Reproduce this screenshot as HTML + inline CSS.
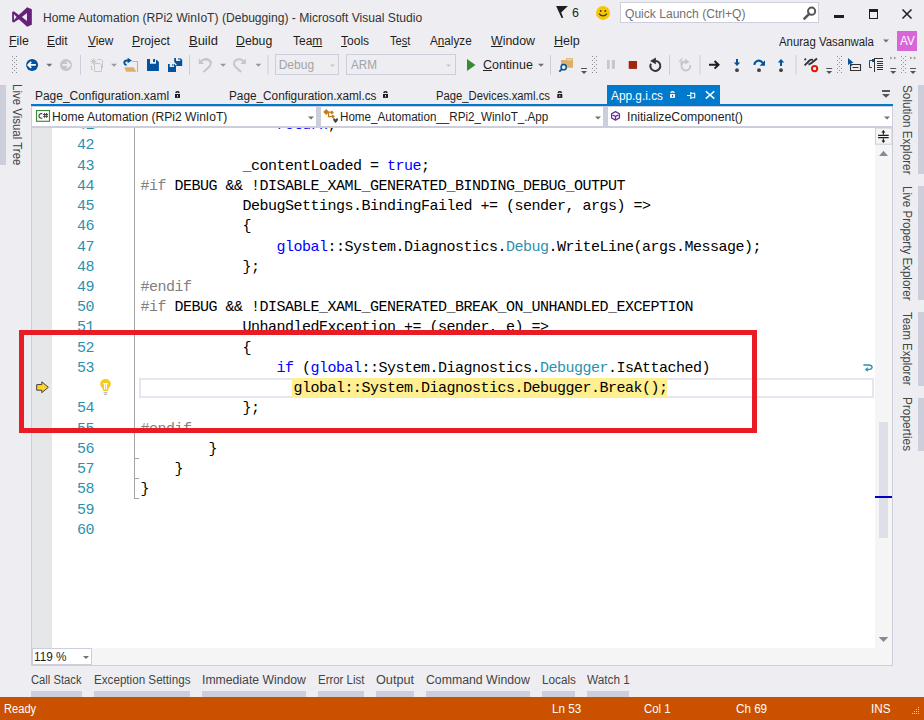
<!DOCTYPE html>
<html><head><meta charset="utf-8"><style>
html,body{margin:0;padding:0;}
body{width:924px;height:720px;position:relative;overflow:hidden;background:#EEEEF2;font-family:"Liberation Sans", sans-serif;}
.r{position:absolute;}
.t{position:absolute;white-space:nowrap;line-height:1;font-family:"Liberation Sans", sans-serif;}
.t u{text-decoration:underline;text-underline-offset:1px;}
.m{position:absolute;white-space:pre;font-family:"Liberation Mono", monospace;font-size:15px;line-height:15px;letter-spacing:-0.5px;color:#000;}
</style></head><body>
<svg class="r" style="left:0px;top:0px;" width="40" height="30" viewBox="0 0 40 30"><path fill="#68217A" fill-rule="evenodd" d="M12.15 12.12 L13.78 11.22 L18.83 15 L27.13 7.25 L31.83 9.23 L31.83 24.76 L27.13 26.74 L18.83 19.16 L13.78 22.6 L12.15 21.7 Z M13.96 14.29 L16.66 17 L13.96 19.88 Z M26.95 13.03 L21.9 17 L26.95 20.97 Z"/></svg>
<div class="t" style="left:42.99px;top:11.84px;font-size:12px;color:#333333;transform:scaleX(1.0085);transform-origin:0 0;">Home Automation (RPi2 WinIoT) (Debugging) - Microsoft Visual Studio</div>
<svg class="r" style="left:555px;top:4px;" width="16" height="16" viewBox="0 0 16 16"><path fill="#1E1E1E" d="M1.1 2.1 L12.9 2.1 L6.2 8.6 L8.3 13.8 L6.6 13.9 Z"/></svg>
<div class="t" style="left:571.58px;top:6.84px;font-size:12px;color:#1E1E1E;transform:scaleX(1.0357);transform-origin:0 0;">6</div>
<svg class="r" style="left:595px;top:5px;" width="16" height="16" viewBox="0 0 16 16"><circle cx="8" cy="7.9" r="7" fill="#F6C600"/><rect x="4.9" y="5.1" width="1.5" height="1.7" fill="#333"/><rect x="9.6" y="5.1" width="1.5" height="1.7" fill="#333"/><path d="M4 8.6 Q8 13.2 12 8.6" stroke="#333" stroke-width="1.2" fill="none"/></svg>
<div class="r" style="left:620px;top:2px;width:199px;height:21px;background:#fff;border:1px solid #CCCEDB;box-sizing:border-box;"></div>
<div class="t" style="left:624.80px;top:7.84px;font-size:12px;color:#717171;transform:scaleX(1.0059);transform-origin:0 0;">Quick Launch (Ctrl+Q)</div>
<svg class="r" style="left:802px;top:5px;" width="16" height="16" viewBox="0 0 16 16"><circle cx="9.6" cy="6.2" r="3.6" stroke="#555" stroke-width="2" fill="none"/><path d="M7.2 8.8 L2.4 13.6" stroke="#555" stroke-width="2.6" stroke-linecap="round"/></svg>
<div class="r" style="left:834px;top:14.5px;width:10px;height:3.5px;background:#1E1E1E;"></div>
<div class="r" style="left:869px;top:9px;width:9px;height:9.5px;border:1.2px solid #1E1E1E;border-top-width:3px;box-sizing:border-box;"></div>
<svg class="r" style="left:900px;top:8px;" width="14" height="12" viewBox="0 0 14 12"><path d="M2.5 1.5 L11.5 10.5 M11.5 1.5 L2.5 10.5" stroke="#1E1E1E" stroke-width="1.5"/></svg>
<div class="t" style="left:8.67px;top:34.84px;font-size:12px;color:#1E1E1E;transform:scaleX(1.0335);transform-origin:0 0;"><u>F</u>ile</div>
<div class="t" style="left:47.01px;top:34.84px;font-size:12px;color:#1E1E1E;transform:scaleX(0.9949);transform-origin:0 0;"><u>E</u>dit</div>
<div class="t" style="left:87.60px;top:34.84px;font-size:12px;color:#1E1E1E;transform:scaleX(0.9844);transform-origin:0 0;"><u>V</u>iew</div>
<div class="t" style="left:131.99px;top:34.84px;font-size:12px;color:#1E1E1E;transform:scaleX(1.0138);transform-origin:0 0;"><u>P</u>roject</div>
<div class="t" style="left:188.92px;top:34.84px;font-size:12px;color:#1E1E1E;transform:scaleX(1.0803);transform-origin:0 0;"><u>B</u>uild</div>
<div class="t" style="left:235.98px;top:34.84px;font-size:12px;color:#1E1E1E;transform:scaleX(1.0238);transform-origin:0 0;"><u>D</u>ebug</div>
<div class="t" style="left:292.50px;top:34.84px;font-size:12px;color:#1E1E1E;transform:scaleX(0.9965);transform-origin:0 0;">Tea<u>m</u></div>
<div class="t" style="left:341.30px;top:34.84px;font-size:12px;color:#1E1E1E;transform:scaleX(1.0037);transform-origin:0 0;"><u>T</u>ools</div>
<div class="t" style="left:389.52px;top:34.84px;font-size:12px;color:#1E1E1E;transform:scaleX(0.9263);transform-origin:0 0;">Te<u>s</u>t</div>
<div class="t" style="left:430.00px;top:34.84px;font-size:12px;color:#1E1E1E;transform:scaleX(0.9763);transform-origin:0 0;">A<u>n</u>alyze</div>
<div class="t" style="left:491.20px;top:34.84px;font-size:12px;color:#1E1E1E;transform:scaleX(1.0305);transform-origin:0 0;"><u>W</u>indow</div>
<div class="t" style="left:554.25px;top:34.84px;font-size:12px;color:#1E1E1E;transform:scaleX(1.0474);transform-origin:0 0;"><u>H</u>elp</div>
<div class="t" style="left:779.20px;top:35.84px;font-size:12px;color:#1E1E1E;transform:scaleX(0.9510);transform-origin:0 0;">Anurag Vasanwala</div>
<svg class="r" style="left:882px;top:38px;" width="8" height="6" viewBox="0 0 8 6"><path d="M1 1.5 L7 1.5 L4 4.5 Z" fill="#717171"/></svg>
<div class="r" style="left:897px;top:31px;width:20px;height:20px;background:#D767D8;"></div>
<div class="t" style="left:899.70px;top:34.54px;font-size:12px;color:#fff;transform:scaleX(0.9667);transform-origin:0 0;">AV</div>
<svg class="r" style="left:0;top:52px" width="924" height="26" viewBox="0 52 924 26"><g fill="#8D8D8D" shape-rendering="crispEdges"><rect x="12" y="56" width="1" height="1"/><rect x="16" y="56" width="1" height="1"/><rect x="14" y="58" width="1" height="1"/><rect x="12" y="60" width="1" height="1"/><rect x="16" y="60" width="1" height="1"/><rect x="14" y="62" width="1" height="1"/><rect x="12" y="64" width="1" height="1"/><rect x="16" y="64" width="1" height="1"/><rect x="14" y="66" width="1" height="1"/><rect x="12" y="68" width="1" height="1"/><rect x="16" y="68" width="1" height="1"/><rect x="14" y="70" width="1" height="1"/><rect x="12" y="72" width="1" height="1"/><rect x="16" y="72" width="1" height="1"/></g><circle cx="32.1" cy="64.9" r="6" fill="#00539C"/><path d="M28.2 64.9 L35.8 64.9 M31.2 61.9 L28.2 64.9 L31.2 67.9" stroke="#fff" stroke-width="1.8" fill="none"/><path d="M46.3 63.8 L52.3 63.8 L49.3 66.8 Z" fill="#717171"/><circle cx="66" cy="64.9" r="6" fill="#C6C6C6"/><path d="M69.9 64.9 L62.3 64.9 M66.9 61.9 L69.9 64.9 L66.9 67.9" stroke="#EEEEF2" stroke-width="1.8" fill="none"/><rect x="80" y="55" width="1" height="20" fill="#CCCEDB"/><g stroke="#C6C6C6" stroke-width="1" fill="none"><path d="M93.5 58.5 V64.5 M90.5 61.5 H96.5 M91.4 59.4 L95.6 63.6 M95.6 59.4 L91.4 63.6"/><path d="M97.5 59.5 H101 L102.5 61 V68"/><path d="M94.5 63.5 H100 L101.5 65 V71.5 H94.5 Z"/><path d="M91.5 65.5 V69.5 H93"/></g><path d="M111 63.7 L117 63.7 L114 66.7 Z" fill="#999"/><path d="M132.2 61.5 H137.5 V71.7" stroke="#DCB067" stroke-width="1.1" fill="none"/><path d="M124.3 67.2 H133.6 L136.4 71.8 H126 Z" fill="#DCB067"/><path d="M126.6 64.9 C123.6 64.6 123.4 60.6 127 60.5 H128.6" stroke="#00539C" stroke-width="1.9" fill="none"/><path d="M127.6 57.7 L131.9 60.4 L127.6 63.3 Z" fill="#00539C"/><path fill="#00539C" fill-rule="evenodd" d="M147 59 H155.8 L158.9 62 V70.9 H147 Z M150 59 V63.7 H156 V59 Z"/><rect x="153.1" y="59" width="1.9" height="3" fill="#00539C"/><path fill="#00539C" fill-rule="evenodd" d="M174.2 58.1 H180.39999999999998 L182.2 59.9 V65.9 H174.2 Z M176.0 58.1 V60.9 H180.2 V58.1 Z"/><rect x="178.39999999999998" y="58.1" width="1.2" height="1.8" fill="#00539C"/><rect x="172.5" y="62.8" width="4.5" height="1.6" fill="#EEEEF2" transform="rotate(45 174.7 63.6)"/><path fill="#00539C" fill-rule="evenodd" d="M168 64.1 H174.2 L176 65.89999999999999 V71.89999999999999 H168 Z M169.8 64.1 V66.89999999999999 H174 V64.1 Z"/><rect x="172.2" y="64.1" width="1.2" height="1.8" fill="#00539C"/><rect x="189" y="55" width="1" height="20" fill="#CCCEDB"/><g fill="none" stroke="#C6C6C6" stroke-width="2"><path d="M200 63 C202 59.5 205 58.8 207.5 59.5 C211 60.6 211.5 64 209.5 66.5 L203.5 72"/><path d="M233.0 63 C235 59.5 238 58.8 240.5 59.5" transform="translate(444.6 0) scale(-1 1)"/></g><path d="M198.8 58.5 V64 H204.2 Z" fill="#C6C6C6"/><path d="M220.1 63.8 L226.1 63.8 L223.1 66.8 Z" fill="#999"/><g fill="none" stroke="#C6C6C6" stroke-width="2"><path d="M244.6 63 C242.6 59.5 239.6 58.8 237.1 59.5 C233.6 60.6 233.1 64 235.1 66.5 L241.1 72"/></g><path d="M245.8 58.5 V64 H240.4 Z" fill="#C6C6C6"/><path d="M255.4 63.8 L261.4 63.8 L258.4 66.8 Z" fill="#999"/><rect x="267.5" y="55" width="1" height="20" fill="#CCCEDB"/><path d="M467 59 L475.5 65 L467 71 Z" fill="#388A34"/><path d="M538 63.8 L544 63.8 L541 66.8 Z" fill="#717171"/><rect x="550" y="55" width="1" height="20" fill="#CCCEDB"/><path d="M561 60 H566 V58.2 H573 V67.8 H561 Z" fill="#DCB067"/><rect x="566.8" y="59.3" width="5.2" height="1" fill="#F3E3C3"/><circle cx="563.7" cy="67.2" r="2.6" fill="#EEEEF2" stroke="#00539C" stroke-width="1.5"/><path d="M561.8 69.1 L559.3 71.6" stroke="#00539C" stroke-width="1.8"/><rect x="581" y="68" width="6" height="1" fill="#555"/><path d="M581 71 L587 71 L584 74 Z" fill="#555"/><g fill="#8D8D8D" shape-rendering="crispEdges"><rect x="592" y="56" width="1" height="1"/><rect x="596" y="56" width="1" height="1"/><rect x="594" y="58" width="1" height="1"/><rect x="592" y="60" width="1" height="1"/><rect x="596" y="60" width="1" height="1"/><rect x="594" y="62" width="1" height="1"/><rect x="592" y="64" width="1" height="1"/><rect x="596" y="64" width="1" height="1"/><rect x="594" y="66" width="1" height="1"/><rect x="592" y="68" width="1" height="1"/><rect x="596" y="68" width="1" height="1"/><rect x="594" y="70" width="1" height="1"/><rect x="592" y="72" width="1" height="1"/><rect x="596" y="72" width="1" height="1"/></g><rect x="607" y="60" width="2.7" height="8.9" fill="#C6C6C6"/><rect x="611.9" y="60" width="3" height="8.9" fill="#C6C6C6"/><rect x="628.7" y="61" width="8.3" height="7.9" fill="#A1260D"/><path d="M655.4 60.9 A5 5 0 1 1 650.9 63.6" fill="none" stroke="#333" stroke-width="2"/><path d="M650 61 L655.9 57.6 L655.9 64.2 Z" fill="#333"/><rect x="669" y="55" width="1" height="20" fill="#CCCEDB"/><path d="M690.1 65 A4.4 4.4 0 1 1 685.3 61.7" fill="none" stroke="#C6C6C6" stroke-width="1.8"/><path d="M685 58.8 L689.6 61.8 L685 64.6 Z" fill="#C6C6C6"/><path d="M682.5 58 L679.5 61.3 L682.6 61.3 L679.8 64.6" stroke="#C6C6C6" stroke-width="1.1" fill="none"/><rect x="699.5" y="55" width="1" height="20" fill="#CCCEDB"/><path d="M709 64.8 H718.5 M714.6 61 L718.5 64.8 L714.6 68.6" stroke="#1E1E1E" stroke-width="2" fill="none"/><path d="M737 58.9 V64" stroke="#00539C" stroke-width="2"/><path d="M733.8 62.4 H740.2 L737 66 Z" fill="#00539C"/><circle cx="737" cy="70.2" r="1.9" fill="#424242"/><path d="M754.3 64.8 C755 60.5 760 59 762.8 63" stroke="#00539C" stroke-width="2.1" fill="none"/><path d="M759.6 65.8 L765 65.8 L765 60.2 Z" fill="#00539C"/><circle cx="759" cy="70.2" r="1.9" fill="#424242"/><path d="M781 61 V66" stroke="#00539C" stroke-width="2"/><path d="M777.8 62.5 H784.2 L781 58.9 Z" fill="#00539C"/><circle cx="781" cy="70.2" r="1.9" fill="#424242"/><rect x="795.5" y="55" width="1" height="20" fill="#CCCEDB"/><path d="M804.6 58.8 L805.9 59.9 M804.6 65.4 L809.5 60.5 Q811 59.2 813 59.8 M808.5 64.5 Q810.5 63.8 811.5 63 L817 58.4" stroke="#333" stroke-width="1.9" fill="none"/><circle cx="814.6" cy="68.6" r="2.6" fill="#fff" stroke="#E51400" stroke-width="2"/><rect x="813.5" y="67.5" width="2.2" height="2.2" fill="#fff"/><rect x="826.2" y="68" width="6" height="1" fill="#555"/><path d="M826.2 71 L832.2 71 L829.2 74 Z" fill="#555"/><g fill="#8D8D8D" shape-rendering="crispEdges"><rect x="837" y="56" width="1" height="1"/><rect x="841" y="56" width="1" height="1"/><rect x="839" y="58" width="1" height="1"/><rect x="837" y="60" width="1" height="1"/><rect x="841" y="60" width="1" height="1"/><rect x="839" y="62" width="1" height="1"/><rect x="837" y="64" width="1" height="1"/><rect x="841" y="64" width="1" height="1"/><rect x="839" y="66" width="1" height="1"/><rect x="837" y="68" width="1" height="1"/><rect x="841" y="68" width="1" height="1"/><rect x="839" y="70" width="1" height="1"/><rect x="837" y="72" width="1" height="1"/><rect x="841" y="72" width="1" height="1"/></g><path d="M850.5 64.5 H860.5 V70.5 H850.5 Z M852.5 67.5 H858.5" stroke="#333" stroke-width="1.1" fill="none"/><path d="M848 58 L848 65.2 L849.9 63.5 L851.2 66 L852.4 65.4 L851.2 63 L853.6 62.8 Z" fill="#00539C"/><path d="M873 60.5 H869.5 V67.5 H872" stroke="#00539C" stroke-width="1" fill="none"/><rect x="872" y="59" width="2" height="3" fill="#00539C"/><path d="M874.5 58 V71.5 M875 58.5 H883 M877 61.5 H883 M877 63.5 H883 M877 65.5 H883 M877 67.5 H883 M877 69.5 H883" stroke="#333" stroke-width="1" fill="none" shape-rendering="crispEdges"/><path d="M890.2 56.6 L892.6 58.1 L890.2 59.6 Z M894.0 56.6 L896.4000000000001 58.1 L894.0 59.6 Z" fill="#999"/><rect x="890.2" y="68" width="6" height="1" fill="#555"/><path d="M890.2 71 L896.2 71 L893.2 74 Z" fill="#555"/><path d="M910 56.6 L912.4 58.1 L910 59.6 Z M913.8 56.6 L916.2 58.1 L913.8 59.6 Z" fill="#999"/><rect x="910" y="68" width="6" height="1" fill="#555"/><path d="M910 71 L916 71 L913 74 Z" fill="#555"/><g fill="#8D8D8D" shape-rendering="crispEdges"><rect x="901" y="56" width="1" height="1"/><rect x="905" y="56" width="1" height="1"/><rect x="903" y="58" width="1" height="1"/><rect x="901" y="60" width="1" height="1"/><rect x="905" y="60" width="1" height="1"/><rect x="903" y="62" width="1" height="1"/><rect x="901" y="64" width="1" height="1"/><rect x="905" y="64" width="1" height="1"/><rect x="903" y="66" width="1" height="1"/><rect x="901" y="68" width="1" height="1"/><rect x="905" y="68" width="1" height="1"/><rect x="903" y="70" width="1" height="1"/><rect x="901" y="72" width="1" height="1"/><rect x="905" y="72" width="1" height="1"/></g></svg>
<div class="r" style="left:275.4px;top:54.3px;width:64.1px;height:21px;border:1px solid #CCCEDB;box-sizing:border-box;"></div>
<div class="r" style="left:346.2px;top:54.3px;width:109.5px;height:21px;border:1px solid #CCCEDB;box-sizing:border-box;"></div>
<div class="t" style="left:278.70px;top:59.34px;font-size:12px;color:#A2A4A5;">Debug</div>
<div class="t" style="left:350.50px;top:59.34px;font-size:12px;color:#A2A4A5;transform:scaleX(0.9767);transform-origin:0 0;">ARM</div>
<svg class="r" style="left:330.3px;top:64px;" width="6" height="4" viewBox="0 0 6 4"><path d="M0 0.5 L5 0.5 L2.5 3 Z" fill="#C6C6C6"/></svg>
<svg class="r" style="left:446.4px;top:64px;" width="6" height="4" viewBox="0 0 6 4"><path d="M0 0.5 L5 0.5 L2.5 3 Z" fill="#C6C6C6"/></svg>
<div class="t" style="left:482.78px;top:59.34px;font-size:12px;color:#1E1E1E;transform:scaleX(1.0383);transform-origin:0 0;"><u>C</u>ontinue</div>
<div class="r" style="left:0px;top:85px;width:6px;height:80px;background:#CCCEDB;"></div>
<div class="t" style="left:10px;top:84.04px;font-size:12px;line-height:14px;color:#444444;writing-mode:vertical-rl;transform:scaleY(0.9558);transform-origin:0 0;">Live Visual Tree</div>
<div class="t" style="left:34.71px;top:89.84px;font-size:12px;color:#1E1E1E;transform:scaleX(0.9947);transform-origin:0 0;">Page_Configuration.xaml</div>
<div class="t" style="left:228.82px;top:89.84px;font-size:12px;color:#1E1E1E;transform:scaleX(0.9825);transform-origin:0 0;">Page_Configuration.xaml.cs</div>
<div class="t" style="left:436.36px;top:89.84px;font-size:12px;color:#1E1E1E;transform:scaleX(0.9383);transform-origin:0 0;">Page_Devices.xaml.cs</div>
<div class="r" style="left:607px;top:85px;width:113px;height:21px;background:#007ACC;"></div>
<div class="t" style="left:611.40px;top:89.84px;font-size:12px;color:#fff;transform:scaleX(0.9866);transform-origin:0 0;">App.g.i.cs</div>
<div class="r" style="left:31px;top:104px;width:862px;height:2px;background:#007ACC;"></div>
<svg class="r" style="left:0;top:84px" width="924" height="22" viewBox="0 84 924 22"><path d="M175.6 92.8 Q177.5 90.6 179.4 92.8" stroke="#1E1E1E" stroke-width="1.4" fill="none"/><rect x="175" y="94" width="5" height="3.9" fill="#1E1E1E"/><rect x="177" y="95.1" width="1" height="1.6" fill="#EEEEF2"/><path d="M383.6 92.8 Q385.5 90.6 387.4 92.8" stroke="#1E1E1E" stroke-width="1.4" fill="none"/><rect x="383" y="94" width="5" height="3.9" fill="#1E1E1E"/><rect x="385" y="95.1" width="1" height="1.6" fill="#EEEEF2"/><path d="M557.9 92.8 Q559.8 90.6 561.6999999999999 92.8" stroke="#1E1E1E" stroke-width="1.4" fill="none"/><rect x="557.3" y="94" width="5" height="3.9" fill="#1E1E1E"/><rect x="559.3" y="95.1" width="1" height="1.6" fill="#EEEEF2"/><path d="M670.6 92.8 Q672.5 90.6 674.4 92.8" stroke="#F4F4F4" stroke-width="1.4" fill="none"/><rect x="670" y="94" width="5" height="3.9" fill="#F4F4F4"/><rect x="672" y="95.1" width="1" height="1.6" fill="#003C8F"/><path d="M687 95.5 H690.5 M690.8 92 V99 M691 93.2 H694.7 V97.8 H691" stroke="#fff" stroke-width="1.1" fill="none"/><path d="M705.8 91.3 L714.3 98.6 M714.3 91.3 L705.8 98.6" stroke="#fff" stroke-width="1.5"/><rect x="882" y="90" width="8" height="2" fill="#555"/><path d="M882 94 H890 L886 97.8 Z" fill="#555"/></svg>
<div class="r" style="left:31px;top:106px;width:862px;height:22px;background:#CCCEDB;"></div>
<div class="r" style="left:32px;top:107px;width:284.3px;height:19px;background:#fff;"></div>
<div class="r" style="left:320.8px;top:107px;width:282.2px;height:19px;background:#fff;"></div>
<div class="r" style="left:607.5px;top:107px;width:284px;height:19px;background:#fff;"></div>
<svg class="r" style="left:308.2px;top:115.5px;" width="6" height="4" viewBox="0 0 6 4"><path d="M0 0.5 L6 0.5 L3 3.5 Z" fill="#717171"/></svg>
<svg class="r" style="left:595px;top:115.5px;" width="6" height="4" viewBox="0 0 6 4"><path d="M0 0.5 L6 0.5 L3 3.5 Z" fill="#717171"/></svg>
<svg class="r" style="left:883.6px;top:115.5px;" width="6" height="4" viewBox="0 0 6 4"><path d="M0 0.5 L6 0.5 L3 3.5 Z" fill="#717171"/></svg>
<svg class="r" style="left:0;top:106px" width="924" height="22" viewBox="0 106 924 22"><rect x="36.5" y="110.5" width="13" height="10.8" fill="#F8F8F8" stroke="#388A34" stroke-width="1.1"/><path d="M42.3 113.8 A2.4 2.3 0 1 0 42.3 118" stroke="#424242" stroke-width="1.1" fill="none"/><path d="M44.6 113 V117.8 M46.6 113 V117.8 M43.2 114.5 H48 M43.2 116.4 H48" stroke="#424242" stroke-width="1" fill="none"/><path d="M326.2 109 L329.2 112 L326.2 115 L323.2 112 Z M331.9 110.4 L333.9 112.4 L331.9 114.4 L329.9 112.4 Z M332.8 114.6 L334.8 116.6 L332.8 118.6 L330.8 116.6 Z" fill="#C27D1A"/><path d="M328.8 112.2 H330.5 M328.6 112.2 V116.6 H331" stroke="#C27D1A" stroke-width="1.2" fill="none"/><path d="M335.6 119.6 C334.4 117.6 333.2 117.8 333.2 119.4 C333.2 120.6 334.6 121.8 335.6 123 C336.6 121.8 338 120.6 338 119.4 C338 117.8 336.8 117.6 335.6 119.6 Z" fill="#424242"/><path d="M615.5 111.6 L619.4 113.8 V118 L615.5 120.1 L611.6 118 V113.8 Z M612.6 115 L615.5 116.4 L618.4 115 M615.5 116.4 V120" stroke="#652D90" stroke-width="1.3" fill="none" stroke-linejoin="round"/></svg>
<div class="t" style="left:52.49px;top:110.84px;font-size:12px;color:#1E1E1E;transform:scaleX(1.0075);transform-origin:0 0;">Home Automation (RPi2 WinIoT)</div>
<div class="t" style="left:340.33px;top:110.84px;font-size:12px;color:#1E1E1E;transform:scaleX(0.9695);transform-origin:0 0;">Home_Automation__RPi2_WinIoT_.App</div>
<div class="t" style="left:627.08px;top:110.84px;font-size:12px;color:#1E1E1E;transform:scaleX(1.0224);transform-origin:0 0;">InitializeComponent()</div>
<div class="r" style="left:31px;top:127px;width:862px;height:539px;background:#CCCEDB;"></div>
<div class="r" style="left:32px;top:128px;width:860px;height:520px;background:#fff;"></div>
<div class="r" style="left:32px;top:128px;width:20px;height:520px;background:#E6E7E8;"></div>
<div class="r" style="left:875px;top:128px;width:17px;height:520px;background:#F5F5F5;"></div>
<div class="r" style="left:32px;top:648px;width:860px;height:17px;background:#F5F5F5;"></div>
<div class="r" style="left:32px;top:648px;width:60px;height:17px;background:#fff;border:1px solid #CCCEDB;box-sizing:border-box;"></div>
<div class="t" style="left:34.12px;top:650.84px;font-size:12px;color:#1E1E1E;transform:scaleX(0.9781);transform-origin:0 0;">119 %</div>
<div class="r" style="left:134px;top:128px;width:1px;height:370.5px;background:#A5A5A5;"></div>
<div class="r" style="left:134px;top:457.5px;width:5px;height:1px;background:#A5A5A5;"></div>
<div class="r" style="left:134px;top:477.5px;width:5px;height:1px;background:#A5A5A5;"></div>
<div class="r" style="left:134px;top:497.5px;width:5px;height:1px;background:#A5A5A5;"></div>
<div class="r" style="left:32px;top:128px;width:843px;height:520px;overflow:hidden;">
<div class="r" style="left:107px;top:250px;width:735px;height:20px;border:2px solid #E6E6F0;box-sizing:border-box;"></div>
<div class="r" style="left:260.3px;top:250px;width:374.7px;height:20px;background:#FFEF91;"></div>
<div class="m" style="left:244.40px;top:-9.89px;"><span style="color:#0000FF">return</span><span style="color:#000000">;</span></div>
<div class="m" style="left:210.40px;top:30.71px;"><span style="color:#000000">_contentLoaded = </span><span style="color:#0000FF">true</span><span style="color:#000000">;</span></div>
<div class="m" style="left:108.40px;top:50.71px;"><span style="color:#808080">#if</span><span style="color:#000000"> DEBUG &amp;&amp; !DISABLE_XAML_GENERATED_BINDING_DEBUG_OUTPUT</span></div>
<div class="m" style="left:210.40px;top:70.71px;"><span style="color:#000000">DebugSettings.BindingFailed += (sender, args) =&gt;</span></div>
<div class="m" style="left:210.40px;top:90.71px;"><span style="color:#000000">{</span></div>
<div class="m" style="left:244.40px;top:111.71px;"><span style="color:#0000FF">global</span><span style="color:#000000">::System.Diagnostics.</span><span style="color:#2B91AF">Debug</span><span style="color:#000000">.WriteLine(args.Message);</span></div>
<div class="m" style="left:210.40px;top:131.71px;"><span style="color:#000000">};</span></div>
<div class="m" style="left:108.40px;top:151.71px;"><span style="color:#808080">#endif</span></div>
<div class="m" style="left:108.40px;top:171.71px;"><span style="color:#808080">#if</span><span style="color:#000000"> DEBUG &amp;&amp; !DISABLE_XAML_GENERATED_BREAK_ON_UNHANDLED_EXCEPTION</span></div>
<div class="m" style="left:210.40px;top:191.71px;"><span style="color:#000000">UnhandledException += (sender, e) =&gt;</span></div>
<div class="m" style="left:210.40px;top:212.71px;"><span style="color:#000000">{</span></div>
<div class="m" style="left:244.40px;top:232.71px;"><span style="color:#0000FF">if</span><span style="color:#000000"> (</span><span style="color:#0000FF">global</span><span style="color:#000000">::System.Diagnostics.</span><span style="color:#2B91AF">Debugger</span><span style="color:#000000">.IsAttached)</span></div>
<div class="m" style="left:210.40px;top:272.71px;"><span style="color:#000000">};</span></div>
<div class="m" style="left:108.40px;top:293.71px;"><span style="color:#808080">#endif</span></div>
<div class="m" style="left:176.40px;top:313.71px;"><span style="color:#000000">}</span></div>
<div class="m" style="left:142.40px;top:333.71px;"><span style="color:#000000">}</span></div>
<div class="m" style="left:108.40px;top:353.71px;"><span style="color:#000000">}</span></div>
<div class="m" style="left:261.40px;top:252.71px;"><span style="color:#000000">global::System.Diagnostics.Debugger.Break();</span></div>
<div class="m" style="left:45px;top:-9.89px;color:#2B91AF">41</div>
<div class="m" style="left:45px;top:9.71px;color:#2B91AF">42</div>
<div class="m" style="left:45px;top:30.71px;color:#2B91AF">43</div>
<div class="m" style="left:45px;top:50.71px;color:#2B91AF">44</div>
<div class="m" style="left:45px;top:70.71px;color:#2B91AF">45</div>
<div class="m" style="left:45px;top:90.71px;color:#2B91AF">46</div>
<div class="m" style="left:45px;top:111.71px;color:#2B91AF">47</div>
<div class="m" style="left:45px;top:131.71px;color:#2B91AF">48</div>
<div class="m" style="left:45px;top:151.71px;color:#2B91AF">49</div>
<div class="m" style="left:45px;top:171.71px;color:#2B91AF">50</div>
<div class="m" style="left:45px;top:191.71px;color:#2B91AF">51</div>
<div class="m" style="left:45px;top:212.71px;color:#2B91AF">52</div>
<div class="m" style="left:45px;top:232.71px;color:#2B91AF">53</div>
<div class="m" style="left:45px;top:272.71px;color:#2B91AF">54</div>
<div class="m" style="left:45px;top:293.71px;color:#2B91AF">55</div>
<div class="m" style="left:45px;top:313.71px;color:#2B91AF">56</div>
<div class="m" style="left:45px;top:333.71px;color:#2B91AF">57</div>
<div class="m" style="left:45px;top:353.71px;color:#2B91AF">58</div>
<div class="m" style="left:45px;top:374.71px;color:#2B91AF">59</div>
<div class="m" style="left:45px;top:394.71px;color:#2B91AF">60</div>
</div>
<svg class="r" style="left:0;top:0" width="924" height="720" viewBox="0 0 924 720"><path d="M36.7 384.6 H41.8 V381.8 L48.3 387.3 L41.8 392.7 V390.2 H36.7 Z" fill="#FFD42A" stroke="#424242" stroke-width="1"/><path d="M105.5 379 C102.4 379 100.2 381.2 100.2 384 C100.2 386 101.5 387.3 102.5 388.6 L103 391 H108 L108.5 388.6 C109.5 387.3 110.8 386 110.8 384 C110.8 381.2 108.6 379 105.5 379 Z" fill="#F6CB1F"/><path d="M103.2 383.6 H107.8 M104.6 383.6 V389.5 M106.4 383.6 V389.5" stroke="#fff" stroke-width="1.1" fill="none"/><path d="M103.6 392.8 H107.4 M104.3 394.6 H106.7" stroke="#9A9A9A" stroke-width="0.9"/><path d="M863.4 364.9 H868.5 C873.3 365 873.3 369.6 868 369.6 H866.2" stroke="#2B91AF" stroke-width="1.5" fill="none"/><path d="M865 369.6 L867.6 367.1 L867.6 372.1 Z" fill="#2B91AF"/><rect x="875.5" y="128" width="16.5" height="16.2" fill="#F5F5F5" stroke="#CCCEDB" stroke-width="1"/><path d="M878.1 135.4 H888.7 M878.1 137.6 H888.7 M883.4 131.5 V134.6 M883.4 138.4 V141.5" stroke="#1E1E1E" stroke-width="1.1"/><path d="M881.4 132.4 L883.4 130 L885.4 132.4 Z M881.4 140.6 L883.4 143 L885.4 140.6 Z" fill="#1E1E1E"/><path d="M879.1 156 L883.5 150.8 L888 156 Z M878.7 637 L888.3 637 L883.5 642 Z" fill="#868999"/><path d="M83 656 H89 L86 659.1 Z" fill="#717171"/></svg>
<div class="r" style="left:879px;top:422px;width:9px;height:116px;background:#DFDFEA;"></div>
<div class="r" style="left:875px;top:496px;width:17px;height:2px;background:#0000C8;"></div>
<div class="r" style="left:918px;top:85px;width:6px;height:88.69999999999999px;background:#CCCEDB;"></div>
<div class="t" style="left:900px;top:84.81px;font-size:12px;line-height:14px;color:#444444;writing-mode:vertical-rl;transform:scaleY(0.9802);transform-origin:0 0;">Solution Explorer</div>
<div class="r" style="left:918px;top:186px;width:6px;height:114px;background:#CCCEDB;"></div>
<div class="t" style="left:900px;top:185.74px;font-size:12px;line-height:14px;color:#444444;writing-mode:vertical-rl;transform:scaleY(0.9643);transform-origin:0 0;">Live Property Explorer</div>
<div class="r" style="left:918px;top:312.2px;width:6px;height:73.40000000000003px;background:#CCCEDB;"></div>
<div class="t" style="left:900px;top:312.21px;font-size:12px;line-height:14px;color:#444444;writing-mode:vertical-rl;transform:scaleY(0.9506);transform-origin:0 0;">Team Explorer</div>
<div class="r" style="left:918px;top:397.8px;width:6px;height:52.89999999999998px;background:#CCCEDB;"></div>
<div class="t" style="left:900px;top:397.01px;font-size:12px;line-height:14px;color:#444444;writing-mode:vertical-rl;transform:scaleY(0.9887);transform-origin:0 0;">Properties</div>
<div class="t" style="left:31.24px;top:673.84px;font-size:12px;color:#444444;transform:scaleX(0.9363);transform-origin:0 0;">Call Stack</div>
<div class="r" style="left:31.2px;top:691px;width:50.6px;height:6px;background:#CCCEDB;"></div>
<div class="t" style="left:93.63px;top:673.84px;font-size:12px;color:#444444;transform:scaleX(0.9704);transform-origin:0 0;">Exception Settings</div>
<div class="r" style="left:94.0px;top:691px;width:95.69999999999999px;height:6px;background:#CCCEDB;"></div>
<div class="t" style="left:201.58px;top:673.84px;font-size:12px;color:#444444;transform:scaleX(1.0188);transform-origin:0 0;">Immediate Window</div>
<div class="r" style="left:202.1px;top:691px;width:103.50000000000003px;height:6px;background:#CCCEDB;"></div>
<div class="t" style="left:317.65px;top:673.84px;font-size:12px;color:#444444;transform:scaleX(0.9538);transform-origin:0 0;">Error List</div>
<div class="r" style="left:318.0px;top:691px;width:45.99999999999998px;height:6px;background:#CCCEDB;"></div>
<div class="t" style="left:375.57px;top:673.84px;font-size:12px;color:#444444;transform:scaleX(1.0565);transform-origin:0 0;">Output</div>
<div class="r" style="left:375.59999999999997px;top:691px;width:38.000000000000036px;height:6px;background:#CCCEDB;"></div>
<div class="t" style="left:425.99px;top:673.84px;font-size:12px;color:#444444;transform:scaleX(1.0238);transform-origin:0 0;">Command Window</div>
<div class="r" style="left:426.0px;top:691px;width:103.79999999999993px;height:6px;background:#CCCEDB;"></div>
<div class="t" style="left:541.52px;top:673.84px;font-size:12px;color:#444444;transform:scaleX(0.9760);transform-origin:0 0;">Locals</div>
<div class="r" style="left:541.9px;top:691px;width:33.1px;height:6px;background:#CCCEDB;"></div>
<div class="t" style="left:587.20px;top:673.84px;font-size:12px;color:#444444;transform:scaleX(0.9837);transform-origin:0 0;">Watch 1</div>
<div class="r" style="left:586.6999999999999px;top:691px;width:42.80000000000005px;height:6px;background:#CCCEDB;"></div>
<div class="r" style="left:0px;top:697px;width:924px;height:23px;background:#CA5100;"></div>
<div class="t" style="left:3.57px;top:702.84px;font-size:12px;color:#fff;transform:scaleX(0.9258);transform-origin:0 0;">Ready</div>
<div class="t" style="left:551.53px;top:702.84px;font-size:12px;color:#fff;transform:scaleX(0.9720);transform-origin:0 0;">Ln 53</div>
<div class="t" style="left:643.83px;top:702.84px;font-size:12px;color:#fff;transform:scaleX(0.9515);transform-origin:0 0;">Col 1</div>
<div class="t" style="left:735.52px;top:702.84px;font-size:12px;color:#fff;transform:scaleX(0.9708);transform-origin:0 0;">Ch 69</div>
<div class="t" style="left:870.92px;top:702.84px;font-size:12px;color:#fff;transform:scaleX(0.9783);transform-origin:0 0;">INS</div>
<svg class="r" style="left:0;top:697px" width="924" height="23" viewBox="0 697 924 23"><rect x="918" y="707" width="1" height="1" fill="#F2C7A8"/><rect x="916" y="709" width="1" height="1" fill="#F2C7A8"/><rect x="918" y="709" width="1" height="1" fill="#F2C7A8"/><rect x="914" y="711" width="1" height="1" fill="#F2C7A8"/><rect x="916" y="711" width="1" height="1" fill="#F2C7A8"/><rect x="918" y="711" width="1" height="1" fill="#F2C7A8"/><rect x="912" y="713" width="1" height="1" fill="#F2C7A8"/><rect x="914" y="713" width="1" height="1" fill="#F2C7A8"/><rect x="916" y="713" width="1" height="1" fill="#F2C7A8"/><rect x="918" y="713" width="1" height="1" fill="#F2C7A8"/></svg>
<div class="r" style="left:19px;top:330px;width:738px;height:103px;border:5px solid #E81C24;box-sizing:border-box;"></div>
</body></html>
